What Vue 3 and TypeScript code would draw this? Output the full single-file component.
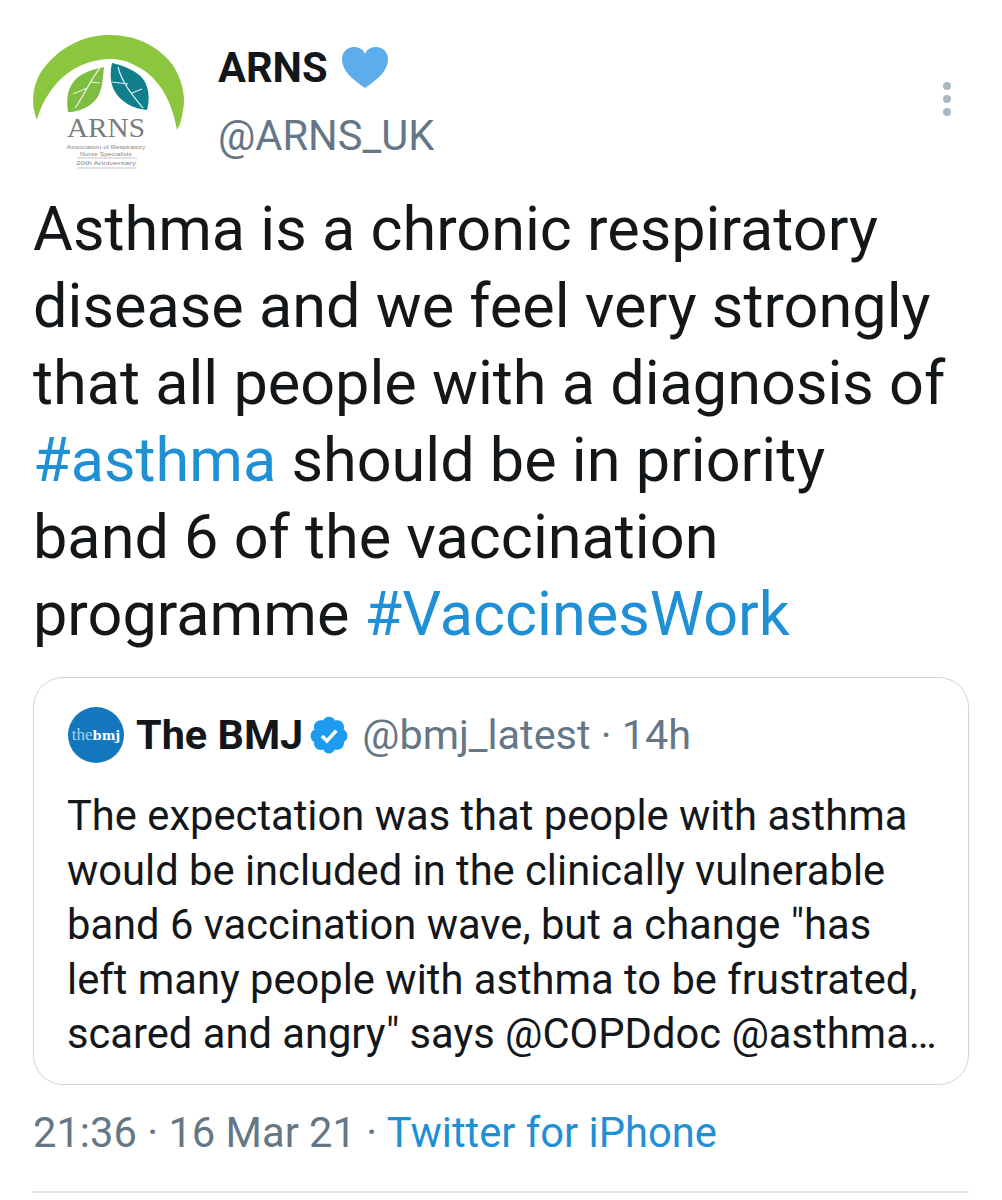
<script setup lang="ts">
const quoteLines: string[] = [
  'The expectation was that people with asthma',
  'would be included in the clinically vulnerable',
  'band 6 vaccination wave, but a change "has',
  'left many people with asthma to be frustrated,',
  'scared and angry" says @COPDdoc @asthma…',
]
</script>

<template>
  <main class="tweet">
    <header class="head">
      <svg class="logo" viewBox="0 0 160 150" width="160" height="150">
        <path d="M7 90C0 72 2 50 18 33 34 15 56 5 80 5c26 0 48 11 62 29 11 16 14 36 11 46-1 8-3 15-6 20-5-30-19-53-39-63-10-6-18-8-28-8-20 0-40 9-54 25C16 66 10 78 7 90Z" fill="#8cc63f" />
        <path d="M74 37C60 40 48 44 42 54c-6 9-5 20-4 28 14 0 28-8 32-20 3-8 3-17 4-25Z" fill="#7cbd42" />
        <path d="M82 33c13 3 28 9 33 19 5 10 4 20 2 28-13-1-27-8-33-20-4-8-4-18-2-27Z" fill="#117e8c" />
        <path d="M70 38C60 50 54 66 45 78M60 52l10 1M43 64l14-6" stroke="#e6f3d5" stroke-width="1.2" fill="none" />
        <path d="M88 37c4 16 15 29 25 41M82 52l16 2M102 63l10-4" stroke="#d8eef0" stroke-width="1.2" fill="none" />
        <text x="76" y="107" text-anchor="middle" textLength="78" lengthAdjust="spacingAndGlyphs" class="logo-name">ARNS</text>
        <text x="76" y="119" text-anchor="middle" textLength="79" lengthAdjust="spacingAndGlyphs" class="logo-small">Association of Respiratory</text>
        <text x="76" y="126" text-anchor="middle" textLength="52" lengthAdjust="spacingAndGlyphs" class="logo-small">Nurse Specialists</text>
        <text x="76" y="135" text-anchor="middle" textLength="60" lengthAdjust="spacingAndGlyphs" class="logo-small">20th Anniversary</text>
        <path d="M47 128h60M47 138h60" stroke="#b4b8b8" stroke-width=".8" />
      </svg>
      <div class="who">
        <div class="name">
          <span>ARNS</span>
          <svg viewBox="0 0 46 41" width="46" height="41">
            <path d="M23 41C10 32 0 24 0 12 0 5 5 0 12 0c5 0 9 2 11 7 2-5 6-7 11-7 7 0 12 5 12 12 0 12-10 20-23 29Z" fill="#5dadec" />
          </svg>
        </div>
        <div class="handle">@ARNS_UK</div>
      </div>
      <div class="more"><i></i><i></i><i></i></div>
    </header>

    <p class="body">
      Asthma is a chronic respiratory<br />
      disease and we feel very strongly<br />
      that all people with a diagnosis of<br />
      <a>#asthma</a> should be in priority<br />
      band 6 of the vaccination<br />
      programme <a>#VaccinesWork</a>
    </p>

    <section class="quote">
      <div class="quote-head">
        <div class="avatar"><span class="the">the</span><span class="bmj">bmj</span></div>
        <strong>The BMJ</strong>
        <svg class="badge" viewBox="0 0 24 24" width="42" height="42">
          <path d="M22.5 12.5c0-1.58-.875-2.95-2.148-3.6.154-.435.238-.905.238-1.4 0-2.21-1.71-3.998-3.818-3.998-.47 0-.92.084-1.336.25C14.818 2.415 13.51 1.5 12 1.5s-2.816.917-3.437 2.25c-.415-.165-.866-.25-1.336-.25-2.11 0-3.818 1.79-3.818 4 0 .494.083.964.237 1.4-1.272.65-2.147 2.018-2.147 3.6 0 1.495.782 2.798 1.942 3.486-.02.17-.032.34-.032.514 0 2.21 1.708 4 3.818 4 .47 0 .92-.086 1.335-.25.62 1.334 1.926 2.25 3.437 2.25 1.512 0 2.818-.916 3.437-2.25.415.163.865.248 1.336.248 2.11 0 3.818-1.79 3.818-4 0-.174-.012-.344-.033-.513 1.158-.687 1.943-1.99 1.943-3.484Z" fill="#1d9bf0" />
          <path d="M8 12.6l2.8 2.8L16.2 9.5" stroke="#fff" stroke-width="2.1" fill="none" />
        </svg>
        <span class="meta">@bmj_latest · 14h</span>
      </div>
      <p class="quote-text">
        <template v-for="line in quoteLines" :key="line">{{ line }}<br /></template>
      </p>
    </section>

    <footer class="foot">21:36 · 16 Mar 21 · <a>Twitter for iPhone</a></footer>
    <div class="rule"></div>
  </main>
</template>

<style scoped>
.tweet {
  width: 1002px;
  height: 1200px;
  box-sizing: border-box;
  padding: 30px 33px 0;
  background: #fff;
  color: #14171a;
  font-family: Roboto, "Liberation Sans", sans-serif;
  overflow: hidden;
}
.head {
  display: flex;
  height: 155px;
}
.logo {
  margin-left: -3px;
  flex: none;
}
.who {
  margin-left: 28px;
  flex: 1;
}
.name {
  display: flex;
  align-items: center;
  gap: 14px;
  height: 72px;
  padding-top: 2px;
  box-sizing: border-box;
  font-size: 41.6px;
  font-weight: 700;
}
.handle {
  font-size: 41.6px;
  line-height: 68px;
  color: #657786;
}
.more {
  display: flex;
  flex-direction: column;
  gap: 5px;
  padding: 52px 18px 0 0;
}
.more i {
  width: 8px;
  height: 8px;
  border-radius: 50%;
  background: #aab8c2;
}
.body {
  margin: 6px 0 0;
  font-size: 61.2px;
  line-height: 77px;
  white-space: nowrap;
}
a {
  color: #1f8fd6;
}
.quote {
  margin-top: 24px;
  height: 408px;
  box-sizing: border-box;
  border: 1px solid #ccd6dd;
  border-radius: 30px;
  padding: 29px 33px 0 34px;
}
.quote-head {
  display: flex;
  align-items: center;
  height: 56px;
  font-size: 41.4px;
}
.avatar {
  width: 56px;
  height: 56px;
  flex: none;
  display: flex;
  align-items: center;
  justify-content: center;
  border-radius: 50%;
  background: #1277bd;
  margin-right: 12px;
}
.the {
  color: #a9d2ec;
  font-family: "Liberation Serif", serif;
  font-size: 17px;
}
.bmj {
  color: #fff;
  font-family: "DejaVu Serif", serif;
  font-size: 13px;
  font-weight: 700;
}
.quote-head strong {
  font-weight: 700;
}
.badge {
  margin: 0 12px 0 5px;
}
.meta {
  color: #657786;
}
.quote-text {
  margin: 26px 0 0 -1px;
  font-size: 41.7px;
  line-height: 54.5px;
  white-space: nowrap;
}
.foot {
  margin-top: 22px;
  font-size: 41.7px;
  line-height: 52px;
  color: #657786;
}
.rule {
  margin-top: 32px;
  height: 2px;
  background: #e1e8ed;
}
.logo-name {
  font-family: "Liberation Serif", serif;
  font-size: 28px;
  fill: #777c7c;
}
.logo-small {
  font-family: "Liberation Sans", sans-serif;
  font-size: 6.2px;
  fill: #85898a;
}
</style>
